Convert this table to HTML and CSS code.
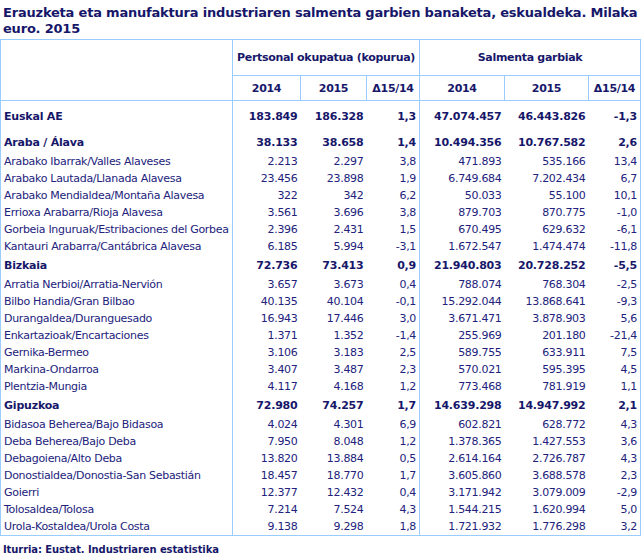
FILE: index.html
```html
<!DOCTYPE html>
<html lang="eu">
<head>
<meta charset="utf-8">
<title>Erauzketa eta manufaktura industriaren salmenta garbien banaketa</title>
<link rel="stylesheet" href="styles.css">
</head>
<body>
<h1 class="title">Erauzketa eta manufaktura industriaren salmenta garbien banaketa, eskualdeka. Milaka euro. 2015</h1>
<table class="data">
<colgroup>
<col class="c-name"><col class="c-a"><col class="c-b"><col class="c-c"><col class="c-d"><col class="c-e"><col class="c-f">
</colgroup>
<thead>
<tr class="h1">
<th rowspan="2" class="corner"></th>
<th colspan="3" class="grp">Pertsonal okupatua (kopurua)</th>
<th colspan="3" class="grp">Salmenta garbiak</th>
</tr>
<tr class="h2">
<th>2014</th><th>2015</th><th class="gend">Δ15/14</th>
<th>2014</th><th>2015</th><th>Δ15/14</th>
</tr>
</thead>
<tbody>
<tr class="total"><td>Euskal AE</td><td>183.849</td><td>186.328</td><td class="gend">1,3</td><td>47.074.457</td><td>46.443.826</td><td>-1,3</td></tr>
<tr class="prov"><td>Araba / Álava</td><td>38.133</td><td>38.658</td><td class="gend">1,4</td><td>10.494.356</td><td>10.767.582</td><td>2,6</td></tr>
<tr><td>Arabako Ibarrak/Valles Alaveses</td><td>2.213</td><td>2.297</td><td class="gend">3,8</td><td>471.893</td><td>535.166</td><td>13,4</td></tr>
<tr><td>Arabako Lautada/Llanada Alavesa</td><td>23.456</td><td>23.898</td><td class="gend">1,9</td><td>6.749.684</td><td>7.202.434</td><td>6,7</td></tr>
<tr><td>Arabako Mendialdea/Montaña Alavesa</td><td>322</td><td>342</td><td class="gend">6,2</td><td>50.033</td><td>55.100</td><td>10,1</td></tr>
<tr><td>Errioxa Arabarra/Rioja Alavesa</td><td>3.561</td><td>3.696</td><td class="gend">3,8</td><td>879.703</td><td>870.775</td><td>-1,0</td></tr>
<tr><td>Gorbeia Inguruak/Estribaciones del Gorbea</td><td>2.396</td><td>2.431</td><td class="gend">1,5</td><td>670.495</td><td>629.632</td><td>-6,1</td></tr>
<tr><td>Kantauri Arabarra/Cantábrica Alavesa</td><td>6.185</td><td>5.994</td><td class="gend">-3,1</td><td>1.672.547</td><td>1.474.474</td><td>-11,8</td></tr>
<tr class="prov"><td>Bizkaia</td><td>72.736</td><td>73.413</td><td class="gend">0,9</td><td>21.940.803</td><td>20.728.252</td><td>-5,5</td></tr>
<tr><td>Arratia Nerbioi/Arratia-Nervión</td><td>3.657</td><td>3.673</td><td class="gend">0,4</td><td>788.074</td><td>768.304</td><td>-2,5</td></tr>
<tr><td>Bilbo Handia/Gran Bilbao</td><td>40.135</td><td>40.104</td><td class="gend">-0,1</td><td>15.292.044</td><td>13.868.641</td><td>-9,3</td></tr>
<tr><td>Durangaldea/Duranguesado</td><td>16.943</td><td>17.446</td><td class="gend">3,0</td><td>3.671.471</td><td>3.878.903</td><td>5,6</td></tr>
<tr><td>Enkartazioak/Encartaciones</td><td>1.371</td><td>1.352</td><td class="gend">-1,4</td><td>255.969</td><td>201.180</td><td>-21,4</td></tr>
<tr><td>Gernika-Bermeo</td><td>3.106</td><td>3.183</td><td class="gend">2,5</td><td>589.755</td><td>633.911</td><td>7,5</td></tr>
<tr><td>Markina-Ondarroa</td><td>3.407</td><td>3.487</td><td class="gend">2,3</td><td>570.021</td><td>595.395</td><td>4,5</td></tr>
<tr><td>Plentzia-Mungia</td><td>4.117</td><td>4.168</td><td class="gend">1,2</td><td>773.468</td><td>781.919</td><td>1,1</td></tr>
<tr class="prov"><td>Gipuzkoa</td><td>72.980</td><td>74.257</td><td class="gend">1,7</td><td>14.639.298</td><td>14.947.992</td><td>2,1</td></tr>
<tr><td>Bidasoa Beherea/Bajo Bidasoa</td><td>4.024</td><td>4.301</td><td class="gend">6,9</td><td>602.821</td><td>628.772</td><td>4,3</td></tr>
<tr><td>Deba Beherea/Bajo Deba</td><td>7.950</td><td>8.048</td><td class="gend">1,2</td><td>1.378.365</td><td>1.427.553</td><td>3,6</td></tr>
<tr><td>Debagoiena/Alto Deba</td><td>13.820</td><td>13.884</td><td class="gend">0,5</td><td>2.614.164</td><td>2.726.787</td><td>4,3</td></tr>
<tr><td>Donostialdea/Donostia-San Sebastián</td><td>18.457</td><td>18.770</td><td class="gend">1,7</td><td>3.605.860</td><td>3.688.578</td><td>2,3</td></tr>
<tr><td>Goierri</td><td>12.377</td><td>12.432</td><td class="gend">0,4</td><td>3.171.942</td><td>3.079.009</td><td>-2,9</td></tr>
<tr><td>Tolosaldea/Tolosa</td><td>7.214</td><td>7.524</td><td class="gend">4,3</td><td>1.544.215</td><td>1.620.994</td><td>5,0</td></tr>
<tr><td>Urola-Kostaldea/Urola Costa</td><td>9.138</td><td>9.298</td><td class="gend">1,8</td><td>1.721.932</td><td>1.776.298</td><td>3,2</td></tr>
</tbody>
</table>
<p class="source">Iturria: Eustat. Industriaren estatistika</p>
</body>
</html>
```
FILE: styles.css
```css
html, body {
  margin: 0;
  padding: 0;
  background: #ffffff;
}
body {
  color: #22227c;
  font-family: "DejaVu Sans", Verdana, sans-serif;
}
.title {
  margin: 0;
  padding: 5px 3px 2px 3px;
  font-size: 13px;
  line-height: 16px;
  font-weight: bold;
  letter-spacing: -0.2px;
  color: #17176a;
}
.data {
  border-collapse: collapse;
  table-layout: fixed;
  width: 641px;
  border: 1px solid #99ccff;
  font-size: 11px;
}
.c-name { width: 232px; }
.c-a { width: 68px; }
.c-b { width: 66px; }
.c-c { width: 53px; }
.c-d { width: 85px; }
.c-e { width: 84px; }
.c-f { width: 52px; }
.data th {
  font-weight: bold;
  color: #17176a;
  border: 1px solid #99ccff;
  padding: 0 2px;
  white-space: nowrap;
  letter-spacing: -0.3px;
}
.h1 th { height: 35px; }
.h2 th { height: 24px; }
.data td {
  padding: 0 3px 0 3px;
  text-align: right;
  white-space: nowrap;
  height: 17px;
  line-height: 17px;
  letter-spacing: -0.3px;
}
.data td:first-child {
  text-align: left;
  border-right: 1px solid #99ccff;
}
.data td.gend { border-right: 1px solid #99ccff; }
.total td, .prov td {
  font-weight: bold;
  color: #17176a;
  letter-spacing: -0.2px;
}
.total td { height: 31px; }
.prov td { height: 21px; }
.source {
  margin: 0;
  padding: 8px 3px 4px 3px;
  font-size: 10px;
  font-weight: bold;
  letter-spacing: -0.1px;
  color: #17176a;
}
```
